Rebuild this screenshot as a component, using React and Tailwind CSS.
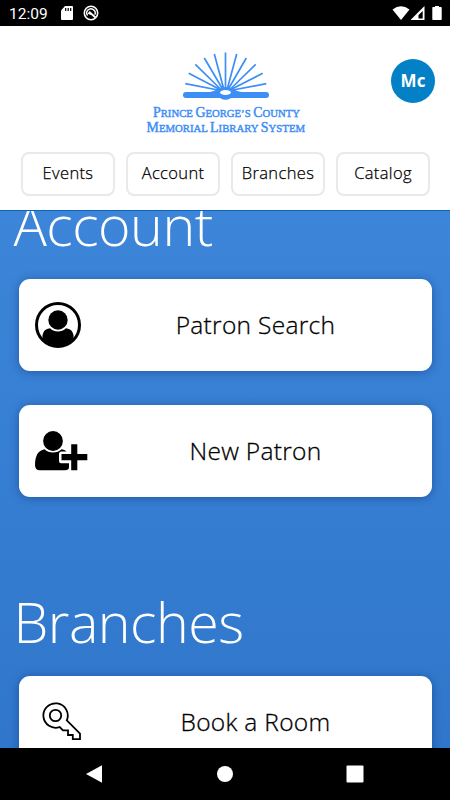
const BLUE = "#3d8ef5";

function StatusBar() {
  return (
    <div className="flex h-[26px] shrink-0 items-center justify-between bg-black pr-2 pl-[9px] text-white">
      <div className="flex items-center">
        <span className="w-[52px] pt-[2px] font-['Roboto',sans-serif] text-[15.5px] leading-[24px]">12:09</span>
        <svg width="12" height="14" viewBox="0 0 12 14" fill="white">
          <path d="M4 0H11Q12 0 12 1V13Q12 14 11 14H1Q0 14 0 13V4.500Z" />
          <path d="M4.700 2V5M7.200 2V5M9.700 2V5" stroke="black" strokeWidth="1.200" />
        </svg>
        <svg className="ml-[10px]" width="16" height="16" viewBox="0 0 16 16" fill="none" stroke="white">
          <circle cx="8" cy="8" r="6.700" strokeWidth="1.600" />
          <path d="M4.600 10.500A4.200 4.200 0 1 1 11.800 9.800" strokeWidth="1.400" />
          <path d="M6 6.800L12.500 12.500" strokeWidth="1.900" />
          <path d="M5 8.200L8.200 9.500" strokeWidth="1.300" />
        </svg>
      </div>
      <div className="flex items-center">
        <svg width="18" height="14" viewBox="0 0 18 14" fill="white">
          <path d="M0.500 3.500Q9 -3.200 17.500 3.500L9 14Z" />
        </svg>
        <svg width="15" height="14" viewBox="0 0 15 14">
          <path d="M14.500 0V14H0.500Z" fill="white" />
          <path d="M12.700 5V12.400H8.500V9Z" fill="black" />
        </svg>
        <svg className="ml-[7px]" width="10" height="14" viewBox="0 0 10 14" fill="white">
          <path d="M3 0H7V1H9Q9.700 1 9.700 1.700V13.200Q9.700 14 9 14H1Q0.300 14 0.300 13.200V1.700Q0.300 1 1 1H3Z" />
        </svg>
      </div>
    </div>
  );
}

function Logo() {
  return (
    <svg width="172" height="95" viewBox="0 0 172 95" className="block">
      <g stroke={BLUE} strokeWidth="1.700">
        <path d="M78 45L45.300 38.700M79 44L48.700 28.300M80 43.500L55.300 19.300M82 43L64.300 13M83.500 43L74.300 9M85.500 43V7.500M87.500 43L96.700 9M89 43L106.300 13M91 43.500L115.700 19.300M92 44L122.700 28.300M93 45L126.300 38.700" />
      </g>
      <rect x="43" y="47" width="86" height="6" rx="3" fill={BLUE} />
      <path d="M68 47.500Q75 46 79.500 43.300Q85.500 40.500 91.500 43.300Q96 46 103 47.500Z" fill={BLUE} />
      <ellipse cx="85.500" cy="50.300" rx="6.500" ry="4.500" fill={BLUE} />
      <ellipse cx="85.500" cy="47.600" rx="5.400" ry="2.500" fill="white" />
      <g fill={BLUE} stroke={BLUE} strokeWidth="0.450" fontFamily="'Liberation Serif', serif">
        <text x="13" y="71.700" fontSize="14" textLength="147" lengthAdjust="spacingAndGlyphs">
          P<tspan fontSize="10.800">RINCE </tspan>G<tspan fontSize="10.800">EORGE’S </tspan>C<tspan fontSize="10.800">OUNTY</tspan>
        </text>
        <text x="6.500" y="86.500" fontSize="14" textLength="158.500" lengthAdjust="spacingAndGlyphs">
          M<tspan fontSize="10.800">EMORIAL </tspan>L<tspan fontSize="10.800">IBRARY </tspan>S<tspan fontSize="10.800">YSTEM</tspan>
        </text>
      </g>
    </svg>
  );
}

function Header() {
  return (
    <header className="relative flex h-[184px] shrink-0 flex-col bg-white pt-[19px]">
      <div className="pl-[140px]">
        <Logo />
      </div>
      <div className="absolute top-[33px] left-[391px] flex size-[44px] items-center justify-center rounded-full bg-[#0380c6] pb-px text-[17px] font-bold text-white">
        Mc
      </div>
      <nav className="mt-[12px] grid grid-cols-4 gap-[11px] px-[21px] pr-[20px]">
        {["Events", "Account", "Branches", "Catalog"].map((name) => (
          <button
            key={name}
            className="flex h-[44px] items-center justify-center rounded-[8px] border-2 border-[#e9e9e9] pb-[2px] text-[16.500px] font-light tracking-[0.350px] text-black [-webkit-text-stroke:0.25px_black]"
          >
            {name}
          </button>
        ))}
      </nav>
    </header>
  );
}

function PatronIcon() {
  return (
    <svg width="46" height="46" viewBox="0 0 46 46">
      <circle cx="23" cy="23" r="21.500" fill="none" stroke="black" strokeWidth="3" />
      <circle cx="23" cy="18" r="9.700" />
      <path d="M7.500 37V33Q8.500 27 15 26.200Q18.500 29.500 23 29.500Q27.500 29.500 31 26.200Q37.500 27 38.500 33V37A21 21 0 0 1 7.500 37Z" />
    </svg>
  );
}

function NewPatronIcon() {
  return (
    <svg width="53" height="40" viewBox="0 0 53 40">
      <circle cx="18" cy="10" r="9.900" />
      <path d="M9.500 18.200Q13 21.500 18 21.500Q23 21.500 26.500 18.200Q30 18.500 31.500 20.500H26Q24 20.500 24 23V30Q24 32.300 26 32.300H34V36Q34 39.300 30 39.300H5Q0 39.300 0 34Q0 20 9.500 18.200Z" />
      <path d="M36.200 13.300H42.300V23H52.300V29.200H42.300V39.300H36.200V29.200H26.500V23H36.200Z" />
    </svg>
  );
}

function KeyIcon() {
  return (
    <svg className="ml-[7px]" width="40" height="40" viewBox="0 0 40 40" fill="none" stroke="black" strokeWidth="1.800">
      <circle cx="13.500" cy="13.500" r="5.700" />
      <path d="M24.800 18.300A12.200 12.200 0 1 0 17.700 25L21 28.400H26V33H30.800V37.200H38V31.500Z" />
    </svg>
  );
}

function Card({ icon, label }) {
  return (
    <div className="flex h-[92px] shrink-0 items-center rounded-[11px] bg-white pl-[16.500px] shadow-[0_1px_10px_rgba(0,30,90,0.4)]">
      <div className="w-[60px] shrink-0">{icon}</div>
      <div className="flex-1 pt-px pr-[16px] text-center text-[24.500px] font-light tracking-[0.300px] text-black [-webkit-text-stroke:0.3px_black]">
        {label}
      </div>
    </div>
  );
}

export default function App() {
  return (
    <div className="flex h-[800px] w-[450px] flex-col overflow-hidden bg-black font-['Open_Sans',sans-serif] font-normal">
      <StatusBar />
      <Header />
      <main className="flex h-[538px] shrink-0 flex-col overflow-hidden border-t border-[#0b63c2] bg-linear-to-b from-[#3c85d9] to-[#3077cc] pr-[18px] pl-[18.500px]">
        <h1 className="-mt-[24px] -ml-[5px] h-[92px] shrink-0 text-[55.500px] leading-[76px] font-light tracking-[-0.500px] text-white">
          Account
        </h1>
        <div className="flex flex-col gap-[34px]">
          <Card icon={<PatronIcon />} label="Patron Search" />
          <Card icon={<NewPatronIcon />} label="New Patron" />
        </div>
        <h1 className="mt-[87px] -ml-[5px] h-[92px] shrink-0 text-[55.500px] leading-[76px] font-light tracking-[-0.500px] text-white">
          Branches
        </h1>
        <Card icon={<KeyIcon />} label="Book a Room" />
      </main>
      <footer className="flex h-[52px] shrink-0 items-center bg-black pl-[85px]">
        <svg width="280" height="20" viewBox="0 0 280 20" fill="white">
          <path d="M1 10L17 1.200V18.800Z" />
          <circle cx="140" cy="10" r="8" />
          <rect x="261.500" y="1.500" width="17" height="17" rx="1" />
        </svg>
      </footer>
    </div>
  );
}
